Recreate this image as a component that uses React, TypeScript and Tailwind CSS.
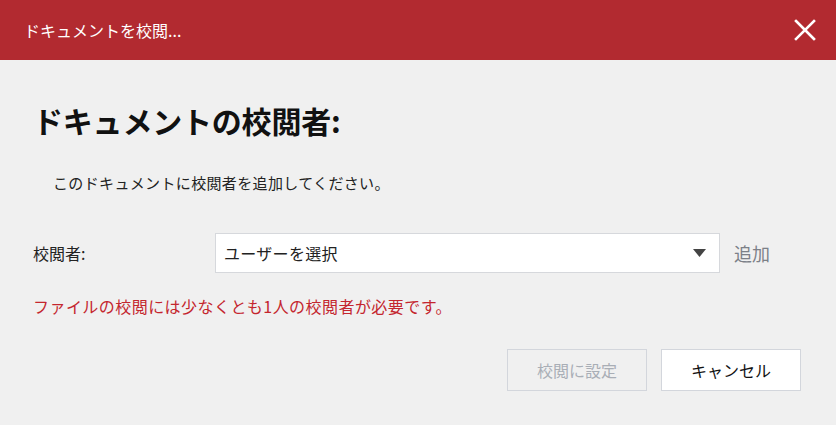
const font = {
  fontFamily: '"Noto Sans CJK JP", "Noto Sans", sans-serif',
};

const CloseIcon = () => (
  <svg width="22" height="22" viewBox="0 0 22 22" fill="none">
    <path
      d="M2 2 L20 20 M20 2 L2 20"
      stroke="#ffffff"
      strokeWidth="2.6"
      strokeLinecap="square"
    />
  </svg>
);

const App = () => {
  return (
    <div
      className="w-[836px] h-[425px] bg-[#f0f0f0] flex flex-col overflow-hidden"
      style={font}
    >
      {/* title bar */}
      <div className="h-[60px] bg-[#b22a30] flex items-center justify-between pl-[24px] pr-[18px] shrink-0">
        <span className="text-white text-[16px] leading-none">
          ドキュメントを校閲...
        </span>
        <button className="w-[26px] h-[26px] flex items-center justify-center">
          <CloseIcon />
        </button>
      </div>

      <div className="flex flex-col pl-[33px] pr-[35px]">
        <h1 className="mt-[40px] h-[40px] leading-[40px] text-[30px] font-bold text-[#111] tracking-[-0.2px]">
          ドキュメントの校閲者:
        </h1>

        <p className="mt-[31px] pl-[20px] h-[24px] leading-[24px] text-[15px] text-[#222] tracking-[0.35px]">
          このドキュメントに校閲者を追加してください。
        </p>

        <div className="mt-[38px] flex items-center h-[40px]">
          <label className="w-[182px] text-[16px] text-[#222]">校閲者:</label>
          <div className="w-[505px] h-[40px] bg-white border border-[#d6d8dc] flex items-center justify-between pl-[8px] pr-[13px]">
            <span className="text-[16px] text-[#222] tracking-[0.3px]">ユーザーを選択</span>
            <svg width="13" height="8" viewBox="0 0 13 8">
              <path d="M0 0 H13 L6.5 8 Z" fill="#444" />
            </svg>
          </div>
          <button className="ml-[14px] text-[18px] text-[#7c8088]">追加</button>
        </div>

        <p className="mt-[21px] h-[24px] leading-[24px] text-[16px] text-[#c4262e] tracking-[0.45px]">
          ファイルの校閲には少なくとも1人の校閲者が必要です。
        </p>

        <div className="mt-[31px] flex justify-end gap-[14px]">
          <button
            disabled
            className="w-[140px] h-[42px] border border-[#d3d6dc] text-[16px] text-[#a9aeb6] bg-transparent"
          >
            校閲に設定
          </button>
          <button className="w-[140px] h-[42px] border border-[#d3d6dc] bg-white text-[16px] text-[#111]">
            キャンセル
          </button>
        </div>
      </div>
    </div>
  );
};

export default App;
